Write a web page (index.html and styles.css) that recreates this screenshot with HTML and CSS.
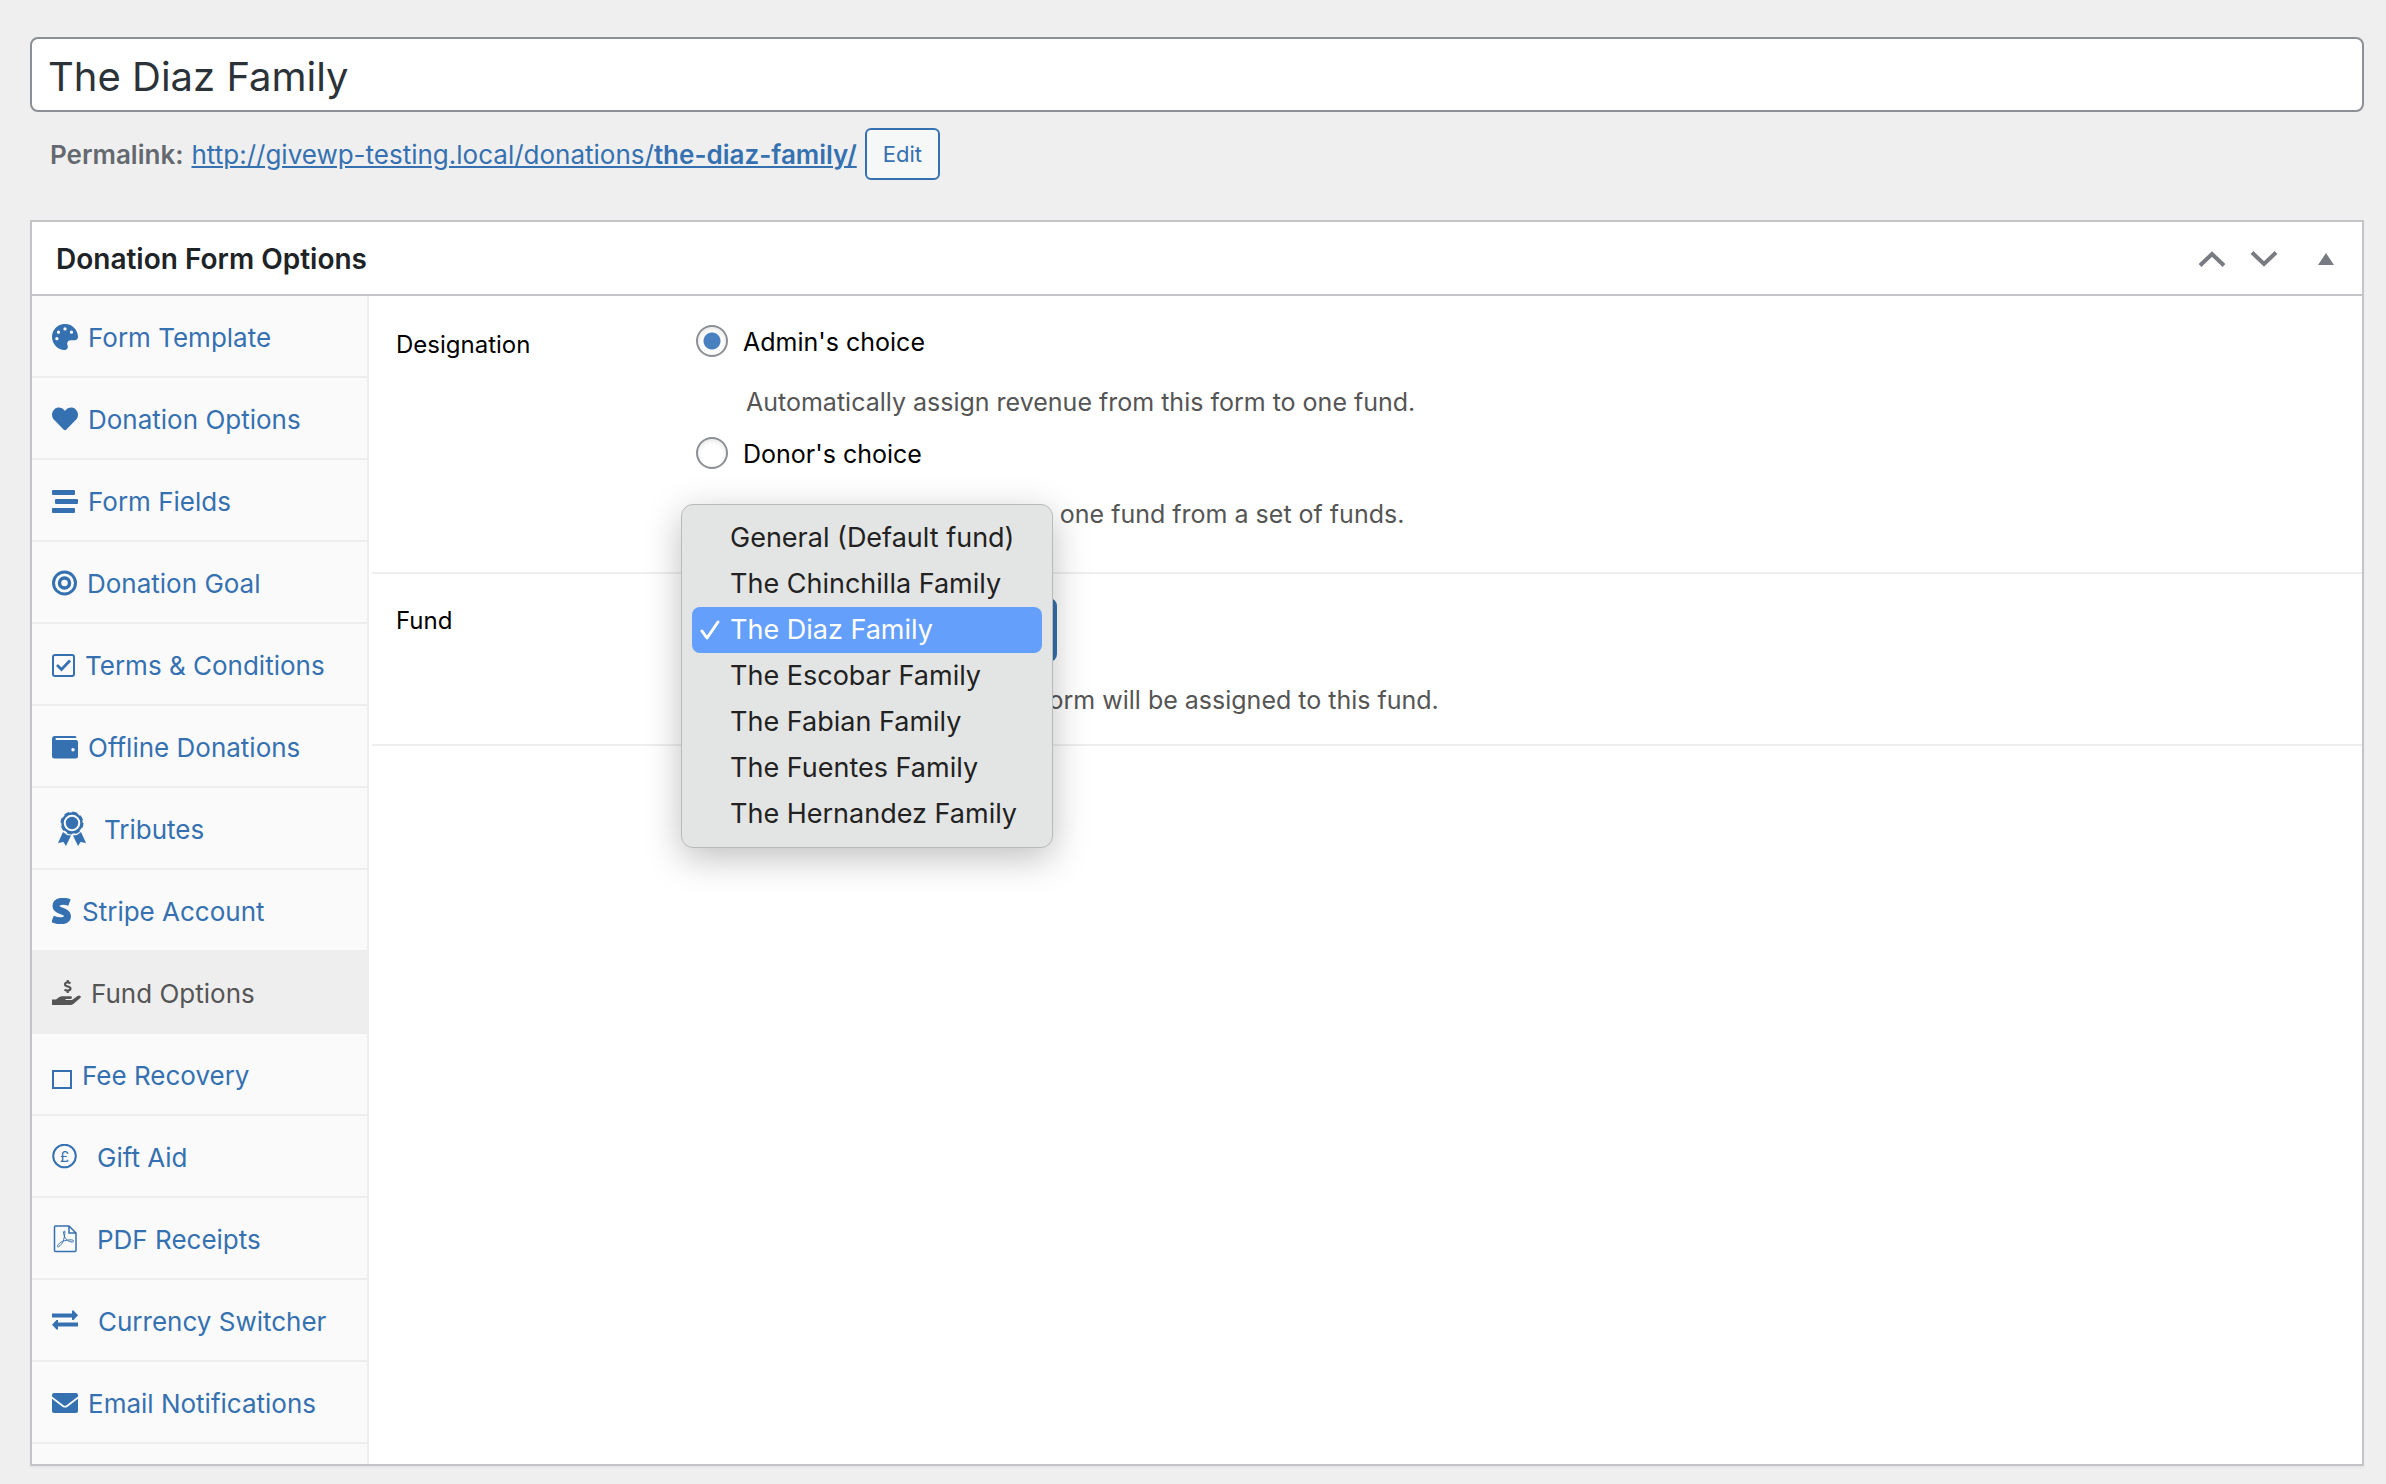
FILE: index.html
```html
<!DOCTYPE html>
<html lang="en">
<head>
  <meta charset="UTF-8" />
  <meta name="viewport" content="width=device-width, initial-scale=1.0" />
  <title>Edit Donation Form</title>
  <link rel="stylesheet" href="styles.css">
</head>
<body>
  <form class="wrap">
    <input class="title" type="text" aria-label="Form title" value="The Diaz Family">
    <div class="permalink">
      <strong>Permalink:</strong>
      <a href="#">http://givewp-testing.local/donations/<b>the-diaz-family/</b></a>
      <button class="edit" type="button">Edit</button>
    </div>

    <section class="postbox">
      <header class="postbox-header">
        <h2>Donation Form Options</h2>
        <div class="handles">
          <button type="button" aria-label="Move up">
            <svg width="28" height="16" viewBox="0 0 28 16"><path d="M2 14.500L14 3l12 11.500" fill="none" stroke="currentColor" stroke-width="4"/></svg>
          </button>
          <button type="button" aria-label="Move down">
            <svg width="28" height="16" viewBox="0 0 28 16"><path d="M2 1.500L14 13 26 1.500" fill="none" stroke="currentColor" stroke-width="4"/></svg>
          </button>
          <button class="toggle" type="button" aria-label="Toggle panel">
            <svg width="16" height="12" viewBox="0 0 16 12"><path d="M8 0l8 12H0z" fill="currentColor"/></svg>
          </button>
        </div>
      </header>

      <div class="panel">
        <nav class="tabs">
          <a href="#">
            <svg width="26" height="26" viewBox="0 0 512 512"><path fill="currentColor" d="M204 5C105 25 25 105 5 204c-37 182 131 326 258 306 41-6 61-54 43-91-23-46 10-99 61-99h80c36 0 65-29 65-65C511 95 365-27 204 5zM96 320a32 32 0 1 1 0-64 32 32 0 0 1 0 64zm32-128a32 32 0 1 1 0-64 32 32 0 0 1 0 64zm128-64a32 32 0 1 1 0-64 32 32 0 0 1 0 64zm128 64a32 32 0 1 1 0-64 32 32 0 0 1 0 64z"/></svg>
            Form Template
          </a>
          <a href="#">
            <svg width="26" height="26" viewBox="0 0 512 512"><path fill="currentColor" d="M462 62c-55-46-136-38-187 14l-19 21-20-21C186 24 104 16 50 62c-63 54-66 150-10 208l193 200c13 13 33 13 46 0l193-200c56-58 53-154-10-208z"/></svg>
            Donation Options
          </a>
          <a href="#">
            <svg width="26" height="26" viewBox="0 0 26 26"><g fill="currentColor"><rect y="2" width="23" height="5" rx="1"/><rect x="3" y="11" width="23" height="5" rx="1"/><rect y="20" width="23" height="5" rx="1"/></g></svg>
            Form Fields
          </a>
          <a href="#">
            <svg width="25" height="26" viewBox="0 0 25 26"><g fill="none" stroke="currentColor"><circle cx="12.500" cy="13" r="11" stroke-width="3"/><circle cx="12.500" cy="13" r="5" stroke-width="3.500"/></g></svg>
            Donation Goal
          </a>
          <a href="#">
            <svg width="23" height="26" viewBox="0 0 23 26"><rect x="1" y="3" width="21" height="21" rx="2" fill="none" stroke="currentColor" stroke-width="2"/><path d="M5 13l4.500 4.500 8.500-9" fill="none" stroke="currentColor" stroke-width="2.700"/></svg>
            Terms &amp; Conditions
          </a>
          <a href="#">
            <svg width="26" height="26" viewBox="0 0 26 26"><path fill="currentColor" fill-rule="evenodd" d="M3 2h20q1.500 0 1.500 2H4.500q-1 0-1 1t1 1H24q2 0 2 2v14q0 2.500-2.500 2.500h-21Q0 24.500 0 22V5q0-3 3-3zM21 14a1.700 1.700 0 1 0 0 3.400A1.700 1.700 0 0 0 21 14z"/></svg>
            Offline Donations
          </a>
          <a class="ribbon" href="#">
            <svg width="28" height="36" viewBox="0 0 28 36"><circle cx="14" cy="12" r="9.500" fill="none" stroke="currentColor" stroke-width="2.400"/><circle cx="14" cy="12" r="10.500" fill="none" stroke="currentColor" stroke-width="2" stroke-dasharray="5 3.250"/><circle cx="14" cy="12" r="6.200" fill="currentColor"/><path fill="currentColor" d="M5 21l4 3 4 .500-5 10.500-2.500-4L0 32zM23 21l-4 3-4 .500L20 35l2.500-4 5.500 1z"/></svg>
            Tributes
          </a>
          <a href="#">
            <svg width="20" height="26" viewBox="0 0 20 26"><path d="M17.500 4.500C12 2.500 4 2.500 4 8c0 6 11.500 4 11.500 10 0 6-9 5.500-15 3" fill="none" stroke="currentColor" stroke-width="7"/></svg>
            Stripe Account
          </a>
          <a class="active" href="#">
            <svg width="29" height="26" viewBox="0 0 29 26"><path fill="currentColor" d="M0 19.500h4l3-2.300q1.500-1 3.500-1h8q1.500 0 1.500 1.300t-1.500 1.400h-5v1h6.500l5.500-4q1.600-1 2.800 0 1 1 0 2l-7 6.100q-1.200 1-3 1H0z"/><path d="M18.500 3.200C16 2 13 2.200 13 4.500c0 2.500 5.500 1.500 5.500 4 0 2.300-3.300 2.500-6 1.200M15.700 0v2.500M15.700 10.500V13" fill="none" stroke="currentColor" stroke-width="2.200"/></svg>
            Fund Options
          </a>
          <a href="#">
            <svg width="20" height="30" viewBox="0 0 20 30"><rect x="1" y="11" width="18" height="17" fill="none" stroke="currentColor" stroke-width="2"/></svg>
            Fee Recovery
          </a>
          <a class="wide" href="#">
            <svg width="25" height="26" viewBox="0 0 25 26"><circle cx="12.500" cy="12" r="11.300" fill="none" stroke="currentColor" stroke-width="2"/><text x="12.500" y="17.500" text-anchor="middle" font-size="15" fill="currentColor">£</text></svg>
            Gift Aid
          </a>
          <a class="wide" href="#">
            <svg width="25" height="28" viewBox="0 0 25 28"><g fill="none" stroke="currentColor"><path d="M3.500 1H17l7 7v17.500q0 1-1 1H3.500q-1 0-1-1V2q0-1 1-1zM17 1v7h7" stroke-width="1.500"/><path d="M12.500 6c-2 0-.5 6 2 8.500s7 3.500 7 1.500-7-1-10 0-6.500 4-6 5.500 4-1.500 5.500-5 2.500-10.500 1.500-10.500z"/></g></svg>
            PDF Receipts
          </a>
          <a class="wide" href="#">
            <svg width="26" height="26" viewBox="0 0 26 26"><path fill="currentColor" d="M0 5.500h20V2.500h1.500L26 7.200 21.500 12H20V9.500H0zM26 14.500H6V12H4.500L0 16.700l4.500 4.800H6v-3h20z"/></svg>
            Currency Switcher
          </a>
          <a href="#">
            <svg width="26" height="26" viewBox="0 0 26 26"><path fill="currentColor" d="M2 3h22q2 0 2 2v1.500L14.500 15.300q-1.500 1-3 0L0 6.500V5q0-2 2-2zM0 8.800l10.700 8.100q2.300 1.400 4.600 0L26 8.800V21q0 2-2 2H2q-2 0-2-2z"/></svg>
            Email Notifications
          </a>
        </nav>

        <div class="options">
          <fieldset class="field">
            <legend>Designation</legend>
            <div class="choices">
              <label><input type="radio" name="designation" checked> Admin's choice</label>
              <p>Automatically assign revenue from this form to one fund.</p>
              <label><input type="radio" name="designation"> Donor's choice</label>
              <p>Allow donors to designate one fund from a set of funds.</p>
            </div>
          </fieldset>
          <div class="field fund">
            <label class="name" for="fund">Fund</label>
            <div class="control">
              <select id="fund">
                <option>The Diaz Family</option>
              </select>
              <ul class="menu">
                <li>General (Default fund)</li>
                <li>The Chinchilla Family</li>
                <li class="selected">
                  <svg width="20" height="20" viewBox="0 0 20 20"><path d="M2 11l5 7L18 2" fill="none" stroke="currentColor" stroke-width="3" stroke-linecap="round" stroke-linejoin="round"/></svg>
                  The Diaz Family
                </li>
                <li>The Escobar Family</li>
                <li>The Fabian Family</li>
                <li>The Fuentes Family</li>
                <li>The Hernandez Family</li>
              </ul>
              <p>All donations made from this form will be assigned to this fund.</p>
            </div>
          </div>
        </div>
      </div>
    </section>
  </form>
</body>
</html>
```

FILE: styles.css
```css
* {
  box-sizing: border-box;
}
body {
  margin: 0;
  background-color: #efefef;
  color: #000;
  font-family: Inter, "Liberation Sans", sans-serif;
  font-size: 25px;
}
button, input, select {
  font-family: inherit;
}
a {
  color: #3571b0;
}
.wrap {
  padding: 37px 22px 18px 30px;
}
.title {
  display: block;
  width: 100%;
  height: 75px;
  padding: 4px 16px 0;
  border: 2px solid #8c8f94;
  border-radius: 8px;
  background-color: #fff;
  color: #2c3338;
  font-size: 40px;
}
.permalink {
  display: flex;
  align-items: center;
  gap: 8px;
  margin-top: 16px;
  padding-left: 20px;
  color: #646970;
  font-size: 26px;
}
.permalink strong, .permalink b {
  font-weight: 600;
}
.edit {
  height: 52px;
  padding: 0 16px;
  border: 2px solid #3571b0;
  border-radius: 6px;
  background-color: #f6f7f7;
  color: #3571b0;
  font-size: 22px;
}
.postbox {
  margin-top: 40px;
  border: 2px solid #c3c4c7;
  background-color: #fff;
  box-shadow: 0 2px 2px rgba(0, 0, 0, 0.04);
}
.postbox-header {
  display: flex;
  align-items: center;
  justify-content: space-between;
  height: 74px;
  padding: 2px 28px 0 24px;
  border-bottom: 2px solid #c3c4c7;
}
.postbox-header h2 {
  margin: 0;
  color: #1d2327;
  font-size: 28px;
  font-weight: 600;
}
.handles {
  display: flex;
  align-items: center;
  gap: 24px;
}
.handles button {
  display: flex;
  padding: 0;
  border: 0;
  background: none;
  color: #787c82;
}
.handles .toggle {
  margin-left: 16px;
}
.panel {
  display: flex;
}
.tabs {
  width: 337px;
  padding-bottom: 20px;
  border-right: 2px solid #eee;
  background-color: #fafafa;
}
.tabs a {
  display: flex;
  align-items: center;
  gap: 10px;
  height: 82px;
  padding: 2px 0 0 20px;
  border-bottom: 2px solid #eee;
  font-size: 26px;
  text-decoration: none;
  white-space: nowrap;
}
.tabs .active {
  background-color: #eee;
  color: #555;
}
.tabs .wide {
  gap: 20px;
}
.tabs .ribbon {
  gap: 18px;
  padding-left: 26px;
}
.options {
  flex: 1;
  padding-left: 3px;
}
.field {
  display: flex;
  margin: 0;
  padding: 26px 0 26px 24px;
  border: 0;
  border-bottom: 2px solid #eee;
}
.field legend, .field .name {
  float: left;
  width: 300px;
  padding: 0;
  font-size: 24px;
  line-height: 46px;
}
.choices label {
  display: flex;
  align-items: center;
  gap: 15px;
  height: 40px;
}
.field p {
  margin: 0;
  color: #555;
  line-height: 40px;
}
.choices p {
  padding: 20px 0 12px 50px;
}
input[type="radio"] {
  appearance: none;
  width: 32px;
  height: 32px;
  margin: 0 0 2px;
  border: 2px solid #8c8f94;
  border-radius: 50%;
  background-color: #fff;
  box-shadow: inset 0 2px 4px rgba(0, 0, 0, 0.1);
}
input[type="radio"]:checked {
  background-image: radial-gradient(circle, #4880c0 8px, transparent 9px);
}
.fund {
  padding-top: 24px;
  padding-bottom: 24px;
}
.control {
  position: relative;
}
select {
  display: block;
  width: 361px;
  height: 64px;
  padding: 0 16px;
  border: 4px solid #3571b0;
  border-radius: 8px;
  background-color: #fff;
  font-size: 26px;
}
.control p {
  padding-top: 18px;
}
.menu {
  position: absolute;
  top: -94px;
  left: -15px;
  width: 372px;
  margin: 0;
  padding: 10px;
  border: 1px solid #b9bbba;
  border-radius: 12px;
  background-color: #e3e5e4;
  color: #222;
  font-size: 27px;
  line-height: 46px;
  list-style: none;
  box-shadow: 0 10px 36px rgba(0, 0, 0, 0.25);
}
.menu li {
  padding-left: 38px;
  border-radius: 8px;
  white-space: nowrap;
}
.menu .selected {
  display: flex;
  align-items: center;
  gap: 10px;
  padding-left: 8px;
  background-color: #649ffb;
  color: #fff;
}
```
